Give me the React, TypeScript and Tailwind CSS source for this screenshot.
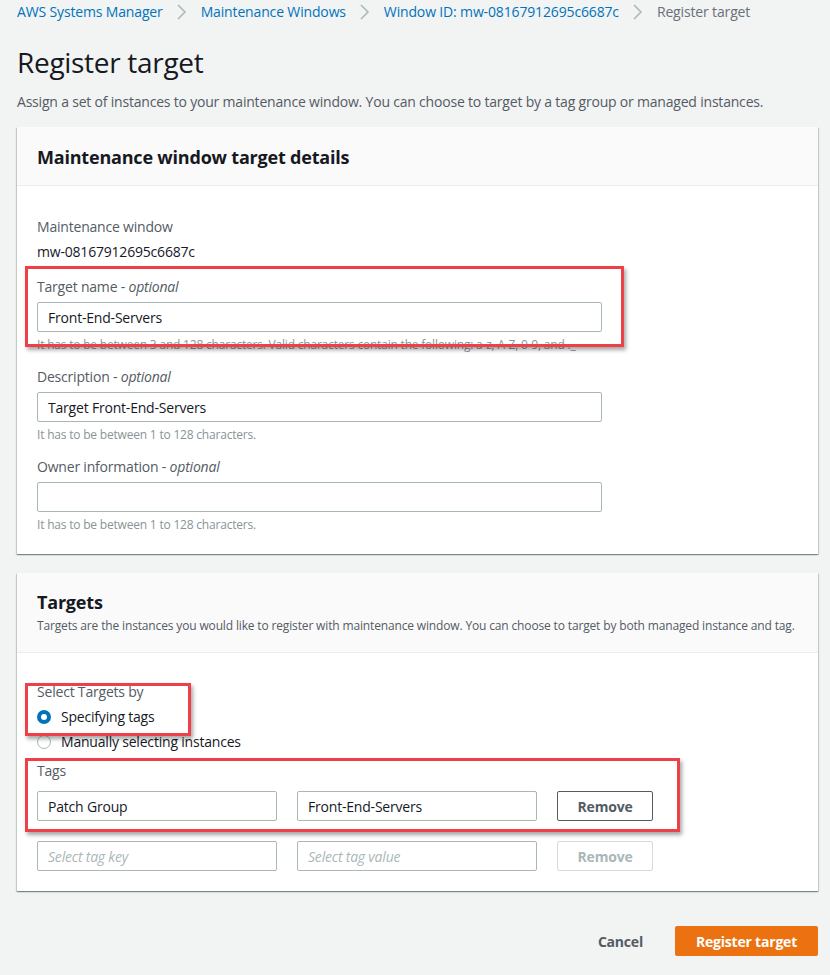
import React from 'react';

// Red annotation box drawn over the form (screenshot highlight)
const Highlight: React.FC<{ className: string }> = ({ className }) => (
  <div
    className={`pointer-events-none absolute border-[3px] border-[#ef3f48] shadow-[2px_3px_4px_rgba(0,0,0,0.35)] ${className}`}
  />
);

const Chevron = () => (
  <svg width="16" height="18" viewBox="0 0 16 18" className="mx-[11px] shrink-0">
    <path d="M4 2 L11 9 L4 16" fill="none" stroke="#aab7b8" strokeWidth="1.5" />
  </svg>
);

interface FieldProps {
  label: string;
  value?: string;
  hint: string;
  highlight?: boolean;
}

const Field: React.FC<FieldProps> = ({ label, value, hint, highlight }) => (
  <div className="relative">
    <div className="text-[14px] leading-[20px] text-[#545b64]">
      {label} - <i>optional</i>
    </div>
    <div className="mt-[5px] flex h-[30px] w-[565px] items-center rounded-[2px] border border-[#aab7b8] bg-white px-[10px] text-[14px] text-[#16191f]">
      {value}
    </div>
    <div className="mt-[5px] whitespace-nowrap text-[12px] leading-[16px] text-[#879596]">{hint}</div>
    {highlight && <Highlight className="left-[-12px] top-[-11px] h-[81px] w-[599px]" />}
  </div>
);

const TagInput: React.FC<{ value?: string; placeholder?: string }> = ({ value, placeholder }) => (
  <div className="flex h-[30px] w-[240px] items-center rounded-[2px] border border-[#aab7b8] bg-white px-[10px] text-[14px]">
    {value ? (
      <span className="text-[#16191f]">{value}</span>
    ) : (
      <span className="italic text-[#aab7b8]">{placeholder}</span>
    )}
  </div>
);

const Radio: React.FC<{ checked?: boolean; label: string }> = ({ checked, label }) => (
  <div className="flex h-[25px] items-center">
    {checked ? (
      <span className="flex h-[14px] w-[14px] items-center justify-center rounded-full bg-[#0073bb]">
        <span className="h-[6px] w-[6px] rounded-full bg-white" />
      </span>
    ) : (
      <span className="h-[14px] w-[14px] rounded-full border border-[#aab7b8] bg-white" />
    )}
    <span className="ml-[10px] text-[14px] text-[#16191f]">{label}</span>
  </div>
);

const cardClass =
  'w-[801px] bg-white shadow-[0_1px_1px_0_rgba(0,28,36,0.3),1px_1px_1px_0_rgba(0,28,36,0.15),-1px_1px_1px_0_rgba(0,28,36,0.15)]';

export default function App() {
  return (
    <div className="min-h-[975px] bg-[#f2f3f3] px-[17px] pt-[3px] font-['Open_Sans',sans-serif] tracking-[-0.2px]">
      {/* Breadcrumbs */}
      <nav className="flex h-[18px] items-center text-[14px] leading-[18px] tracking-[-0.15px]">
        <span className="text-[#0073bb]">AWS Systems Manager</span>
        <Chevron />
        <span className="text-[#0073bb]">Maintenance Windows</span>
        <Chevron />
        <span className="text-[#0073bb]">Window ID: mw-08167912695c6687c</span>
        <Chevron />
        <span className="text-[#687078]">Register target</span>
      </nav>

      <h1 className="mt-[23px] text-[28px] font-normal leading-[36px] tracking-[-0.3px] text-[#16191f]">Register target</h1>
      <p className="mt-[12px] text-[14px] leading-[20px] text-[#545b64]">
        Assign a set of instances to your maintenance window. You can choose to target by a tag group or managed instances.
      </p>

      {/* Target details */}
      <section className={`mt-[15px] ${cardClass}`}>
        <div className="border-b border-[#eaeded] bg-[#fafafa] px-[20px] pb-[17px] pt-[19px]">
          <h2 className="text-[18px] font-bold leading-[22px] text-[#16191f]">Maintenance window target details</h2>
        </div>
        <div className="px-[20px] pb-[21px] pt-[31px]">
          <div className="text-[14px] leading-[20px] text-[#545b64]">Maintenance window</div>
          <div className="mt-[5px] text-[14px] leading-[20px] text-[#16191f]">mw-08167912695c6687c</div>
          <div className="mt-[15px] flex flex-col gap-[14px]">
            <Field
              label="Target name"
              value="Front-End-Servers"
              hint="It has to be between 3 and 128 characters. Valid characters contain the following: a-z, A-Z, 0-9, and ._-"
              highlight
            />
            <Field label="Description" value="Target Front-End-Servers" hint="It has to be between 1 to 128 characters." />
            <Field label="Owner information" hint="It has to be between 1 to 128 characters." />
          </div>
        </div>
      </section>

      {/* Targets */}
      <section className={`mt-[19px] ${cardClass}`}>
        <div className="border-b border-[#eaeded] bg-[#fafafa] px-[20px] pb-[18px] pt-[18px]">
          <h2 className="text-[18px] font-bold leading-[22px] text-[#16191f]">Targets</h2>
          <p className="mt-[5px] whitespace-nowrap text-[12px] leading-[16px] tracking-[-0.15px] text-[#545b64]">
            Targets are the instances you would like to register with maintenance window. You can choose to target by both managed instance and tag.
          </p>
        </div>
        <div className="px-[20px] pb-[20px] pt-[29px]">
          <div className="relative">
            <div className="text-[14px] leading-[20px] text-[#545b64]">Select Targets by</div>
            <div className="mt-[2px]">
              <Radio checked label="Specifying tags" />
              <Radio label="Manually selecting instances" />
            </div>
            <Highlight className="left-[-12px] top-[1px] h-[53px] w-[166px]" />
          </div>

          <div className="relative mt-[7px]">
            <div className="text-[14px] leading-[20px] text-[#545b64]">Tags</div>
            <div className="mt-[10px] flex gap-[20px]">
              <TagInput value="Patch Group" />
              <TagInput value="Front-End-Servers" />
              <button className="h-[30px] w-[96px] rounded-[2px] border border-[#545b64] bg-white text-[14px] font-bold text-[#545b64]">
                Remove
              </button>
            </div>
            <Highlight className="left-[-12px] top-[-3px] h-[74px] w-[655px]" />
          </div>

          <div className="mt-[20px] flex gap-[20px]">
            <TagInput placeholder="Select tag key" />
            <TagInput placeholder="Select tag value" />
            <button className="h-[30px] w-[96px] rounded-[2px] border border-[#d5dbdb] bg-white text-[14px] font-bold text-[#aab7b8]">
              Remove
            </button>
          </div>
        </div>
      </section>

      {/* Footer actions */}
      <div className="mt-[35px] flex w-[801px] items-center justify-end">
        <button className="mr-[32px] text-[14px] font-bold text-[#545b64]">Cancel</button>
        <button className="h-[30px] w-[143px] rounded-[2px] bg-[#ec7211] text-[14px] font-bold text-white">
          Register target
        </button>
      </div>
    </div>
  );
}
